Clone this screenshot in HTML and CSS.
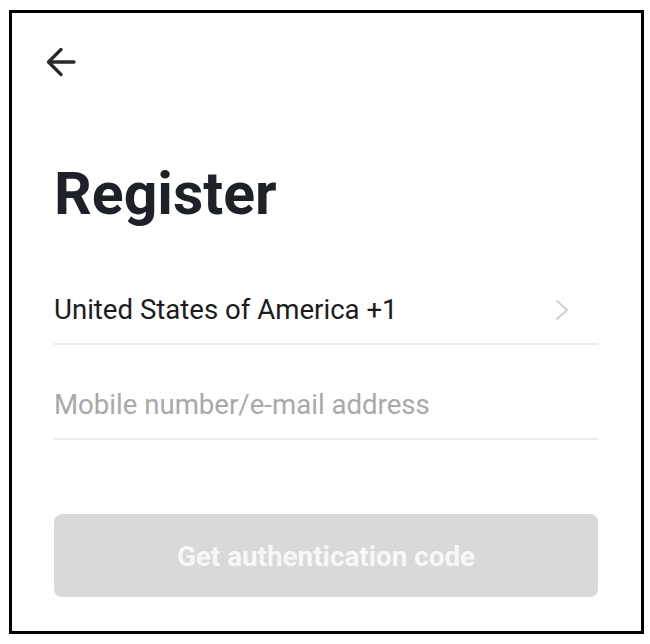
FILE: index.html
```html
<!DOCTYPE html>
<html lang="en">
<head>
<meta charset="utf-8">
<title>Register</title>
<link rel="stylesheet" href="styles.css">
</head>
<body>
<div class="frame">
  <div class="topbar">
    <button class="back" aria-label="Back">
      <svg width="30" height="30" viewBox="0 0 30 30" fill="none" stroke="#2a2a2a" stroke-width="3.3" stroke-linecap="round" stroke-linejoin="round">
        <path d="M28 15 H3"/>
        <path d="M15 2.5 L2.5 15 L15 27.5"/>
      </svg>
    </button>
  </div>
  <div class="content">
    <h1 class="title">Register</h1>
    <div class="row country">
      <span class="country-text">United States of America +1</span>
      <svg class="chev" width="14" height="22" viewBox="0 0 14 22" fill="none" stroke="#c9ced4" stroke-width="1.8" stroke-linecap="round" stroke-linejoin="round">
        <path d="M2 2 L12 11 L2 20"/>
      </svg>
    </div>
    <div class="row">
      <span class="placeholder">Mobile number/e-mail address</span>
    </div>
    <button class="submit">Get authentication code</button>
  </div>
</div>
</body>
</html>
```

FILE: styles.css
```css
html, body {
  margin: 0;
  padding: 0;
  background: #ffffff;
}

body {
  font-family: Roboto, "Liberation Sans", sans-serif;
}

.frame {
  box-sizing: border-box;
  margin: 10px 0 0 9px;
  width: 635px;
  height: 624px;
  border: 3px solid #000000;
  background: #ffffff;
}

.topbar {
  padding: 34px 0 0 34px;
  display: flex;
}

.back {
  display: block;
  padding: 0;
  margin: 0;
  border: 0;
  background: none;
  width: 30px;
  height: 30px;
}

.back svg {
  display: block;
}

.content {
  padding: 0 43px 0 42px;
  display: flex;
  flex-direction: column;
}

.title {
  margin: 84px 0 0 0;
  font-size: 59px;
  line-height: 66px;
  font-weight: 700;
  color: #1e2127;
  letter-spacing: 0;
}

.row {
  display: flex;
  align-items: center;
  justify-content: space-between;
  padding: 45px 0 18px 0;
  border-bottom: 2px solid #ececec;
  font-size: 27.6px;
  line-height: 30px;
}

.country {
  margin-top: 23px;
}

.country-text {
  color: #1c1c1c;
}

.chev {
  display: block;
  margin-right: 29px;
}

.placeholder {
  color: #a9a9a9;
}

.submit {
  margin-top: 74px;
  height: 83px;
  width: 100%;
  border: 0;
  border-radius: 8px;
  background: #d9d9d9;
  color: #f7f7f7;
  font-family: Roboto, "Liberation Sans", sans-serif;
  font-size: 27.8px;
  line-height: 30px;
  font-weight: 700;
  padding: 2px 0 0 0;
}
```
